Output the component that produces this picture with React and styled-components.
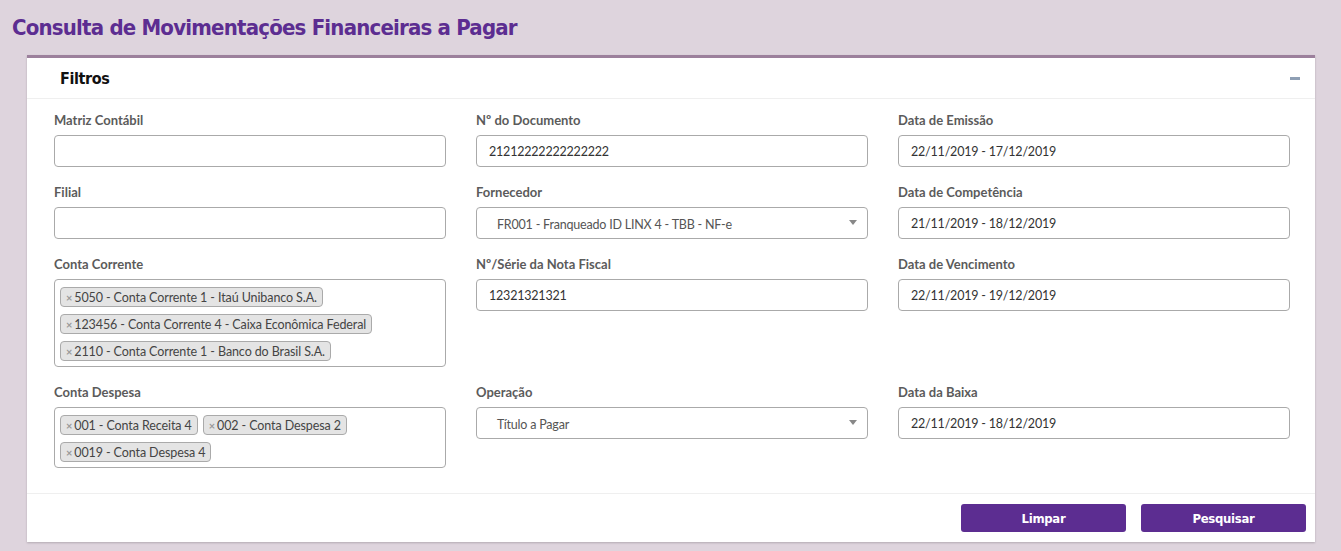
import React from "react";
import styled, { createGlobalStyle } from "styled-components";

const Global = createGlobalStyle`
  html, body { margin: 0; padding: 0; }
  body {
    background: #ded4dd;
    font-family: Lato, "Open Sans", sans-serif;
    width: 1341px;
    height: 551px;
    overflow: hidden;
  }
  * { box-sizing: border-box; }
`;

const Page = styled.div`
  display: flex;
  flex-direction: column;
  padding: 12px 26px 0 27px;
`;

const Title = styled.h1`
  margin: 0 0 11px -15px;
  font-family: "DejaVu Sans Condensed", "DejaVu Sans", sans-serif;
  font-weight: 700;
  font-size: 22px;
  letter-spacing: -0.8px;
  line-height: 32px;
  color: #5c2d91;
`;

const Card = styled.section`
  background: #fff;
  border-top: 3px solid #9c809c;
  box-shadow: 0 1px 2px rgba(0, 0, 0, 0.2);
  display: flex;
  flex-direction: column;
`;

const CardHeader = styled.div`
  height: 41px;
  display: flex;
  align-items: center;
  justify-content: space-between;
  padding: 0 15px 0 33px;
  border-bottom: 1px solid #efefef;
`;

const CardTitle = styled.h2`
  margin: 0;
  font-family: "DejaVu Sans Condensed", "DejaVu Sans", sans-serif;
  font-weight: 700;
  font-size: 16px;
  letter-spacing: -0.4px;
  color: #111;
`;

const Collapse = styled.span`
  width: 10px;
  height: 3px;
  background: #8e9fb4;
  display: block;
  margin-top: 1px;
`;

const Body = styled.div`
  padding: 12px 26px 25px 27px;
  display: flex;
  flex-direction: column;
  gap: 16px;
`;

const Row = styled.div`
  display: grid;
  grid-template-columns: repeat(3, 392px);
  column-gap: 30px;
  align-items: start;
`;

const Field = styled.div`
  display: flex;
  flex-direction: column;
  gap: 6px;
`;

const Label = styled.label`
  font-size: 13px;
  line-height: 18px;
  font-weight: 700;
  color: #5b5b5b;
`;

const Input = styled.div`
  height: 32px;
  border: 1px solid #aaa;
  border-radius: 4px;
  padding: 0 12px;
  display: flex;
  align-items: center;
  font-size: 12.5px;
  letter-spacing: -0.2px;
  color: #333;
`;

const Select = styled(Input)`
  padding: 2px 10px 0 20px;
  justify-content: space-between;
  color: #555;
`;

const Caret = styled.span`
  width: 0;
  height: 0;
  border-left: 4px solid transparent;
  border-right: 4px solid transparent;
  border-top: 5px solid #888;
  margin-top: -4px;
`;

const TagBox = styled.div`
  border: 1px solid #aaa;
  border-radius: 4px;
  padding: 7px 5px 5px 5px;
  min-height: ${(p) => p.$minH || 32}px;
  display: flex;
  flex-wrap: wrap;
  align-content: flex-start;
  gap: 7px 5px;
`;

const Tag = styled.span`
  height: 20px;
  display: inline-flex;
  align-items: center;
  background: #e4e4e4;
  border: 1px solid #aaa;
  border-radius: 4px;
  padding: 0 5px;
  font-size: 12.5px;
  letter-spacing: -0.1px;
  color: #444;
  white-space: nowrap;
`;

const TagX = styled.span`
  color: #999;
  font-weight: 700;
  font-size: 11px;
  margin-right: 2px;
`;

const Footer = styled.div`
  border-top: 1px solid #efefef;
  padding: 10px 9px 10px 0;
  display: flex;
  justify-content: flex-end;
  gap: 15px;
`;

const Button = styled.button`
  width: 165px;
  height: 28px;
  border: none;
  border-radius: 3px;
  background: #5c2d91;
  color: #fff;
  font-family: "DejaVu Sans Condensed", "DejaVu Sans", sans-serif;
  font-weight: 700;
  font-size: 13px;
  letter-spacing: -0.3px;
  cursor: pointer;
`;

const TextField = ({ label, value }) => (
  <Field>
    <Label>{label}</Label>
    <Input>{value}</Input>
  </Field>
);

const SelectField = ({ label, value }) => (
  <Field>
    <Label>{label}</Label>
    <Select>
      <span>{value}</span>
      <Caret />
    </Select>
  </Field>
);

const TagField = ({ label, tags, minH }) => (
  <Field>
    <Label>{label}</Label>
    <TagBox $minH={minH}>
      {tags.map((t) => (
        <Tag key={t}>
          <TagX>×</TagX>
          {t}
        </Tag>
      ))}
    </TagBox>
  </Field>
);

export default function App() {
  return (
    <>
      <Global />
      <Page>
        <Title>Consulta de Movimentações Financeiras a Pagar</Title>
        <Card>
          <CardHeader>
            <CardTitle>Filtros</CardTitle>
            <Collapse />
          </CardHeader>
          <Body>
            <Row>
              <TextField label="Matriz Contábil" value="" />
              <TextField label="Nº do Documento" value="21212222222222222" />
              <TextField label="Data de Emissão" value="22/11/2019 - 17/12/2019" />
            </Row>
            <Row>
              <TextField label="Filial" value="" />
              <SelectField label="Fornecedor" value="FR001 - Franqueado ID LINX 4 - TBB - NF-e" />
              <TextField label="Data de Competência" value="21/11/2019 - 18/12/2019" />
            </Row>
            <Row>
              <TagField
                label="Conta Corrente"
                minH={88}
                tags={[
                  "5050 - Conta Corrente 1 - Itaú Unibanco S.A.",
                  "123456 - Conta Corrente 4 - Caixa Econômica Federal",
                  "2110 - Conta Corrente 1 - Banco do Brasil S.A.",
                ]}
              />
              <TextField label="Nº/Série da Nota Fiscal" value="12321321321" />
              <TextField label="Data de Vencimento" value="22/11/2019 - 19/12/2019" />
            </Row>
            <Row>
              <TagField
                label="Conta Despesa"
                minH={61}
                tags={["001 - Conta Receita 4", "002 - Conta Despesa 2", "0019 - Conta Despesa 4"]}
              />
              <SelectField label="Operação" value="Título a Pagar" />
              <TextField label="Data da Baixa" value="22/11/2019 - 18/12/2019" />
            </Row>
          </Body>
          <Footer>
            <Button>Limpar</Button>
            <Button>Pesquisar</Button>
          </Footer>
        </Card>
      </Page>
    </>
  );
}
